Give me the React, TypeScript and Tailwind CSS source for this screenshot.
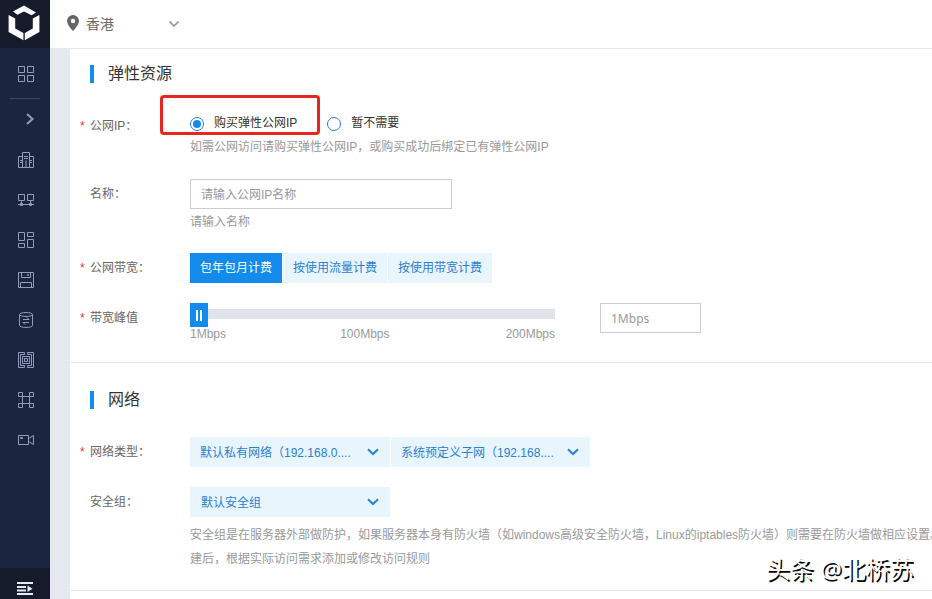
import React, { useState } from 'react';

const HexLogo = () => (
  <svg width="32" height="36" viewBox="0 0 32 36" fill="#fff">
    <path d="M5 6.600 L16 .6 L28 7.400 L23.600 10.200 L16 6.600 L9.400 9.800 Z" />
    <path d="M.6 10 L7.200 13.600 V23.400 L15.400 28 V35.200 L.6 27 Z" />
    <path d="M31.400 10 L24.800 13.600 V23.400 L16.800 28 V35.200 L31.400 27 Z" />
  </svg>
);

const menuIcons: React.ReactNode[] = [
  // region
  <><path d="M4.500 4.500h-4v11h15v-11h-4M4.500 15.500v-15h7v15" /><path d="M2 8.500h3M2 10.500h3M6 4.500h4M6 6.500h4M11 8.500h3M11 10.500h3M8 8.500v7" /></>,
  // servers
  <><path d="M.5 2.500h6v6h-6zM9.500 2.500h6v6h-6zM3.500 8.500v4M12.500 8.500v4M0 12.500h16" /><path d="M2.500 11.500h2v2h-2zM11.500 11.500h2v2h-2z" fill="currentColor" /></>,
  // images
  <path d="M.5.5h6v8h-6zM9.500.5h6v4h-6zM.5 11.500h6v4h-6zM9.500 7.500h6v8h-6z" />,
  // disk
  <path d="M.5.5h15v15h-15zM3.500.5v5h9v-5M9.500 2.500h1v1h-1zM2.500 15.500v-5h11v5" />,
  // database
  <><path d="M1.500 2.500v11c0 2.600 13 2.600 13 0v-11" /><path d="M1.500 2.500c0-2.600 13-2.600 13 0s-13 2.600-13 0z" /><path d="M5 7.500h6l-2-2M11 10.500H5l2 2" /></>,
  // network
  <><path d="M6.500.5h-6v15h6v-2h-4v-11h4zM9.500.5h6v15h-6v-2h4v-11h-4z" /><path d="M4.500 4.500h7v7h-7zM6.500 6.500h3v3h-3z" /></>,
  // nodes
  <path d="M.5.5h4v4h-4zM11.500.5h4v4h-4zM.5 11.500h4v4h-4zM11.500 11.500h4v4h-4zM4.500 4.500h7M4.500 11.500h7M4.500 4v8M11.500 4v8" />,
  // camera
  <path d="M.5 3.500h10v9H.5zM2.500 5.500h2v1h-2zM10.500 6.500l5-3v9l-5-3" />,
];

const Chevron = () => (
  <svg width="12" height="8" viewBox="0 0 12 8" fill="none" stroke="#2a80cf" strokeWidth="2">
    <path d="M1 1.200 L6 6 L11 1.200" />
  </svg>
);

const Sidebar = () => (
  <aside className="w-[50px] shrink-0 h-full flex flex-col bg-[#1b2540] text-[#929dba]">
    <div className="h-12 flex pl-2 pt-[5px] bg-[#151b2b]">
      <HexLogo />
    </div>
    <div className="h-[50px] flex justify-center items-center pl-0.5 pt-0.5">
      <svg width="17" height="17" viewBox="0 0 17 17" fill="none" stroke="currentColor">
        <path d="M.5.5h6v6h-6zM9.500.5h6v6h-6zM.5 9.500h6v6h-6zM9.500 9.500h6v6h-6z" />
      </svg>
    </div>
    <div className="h-px mx-2.5 bg-[#3b4661]" />
    <div className="h-10 flex items-center justify-center pl-2.5">
      <svg width="8" height="12" viewBox="0 0 8 12" fill="none" stroke="currentColor" strokeWidth="2">
        <path d="M1 1 L6.500 6 L1 11" />
      </svg>
    </div>
    <nav className="flex flex-col pt-px">
      {menuIcons.map((icon, i) => (
        <button key={i} className="h-10 flex items-center justify-center pl-0.5">
          <svg width="16" height="16" viewBox="0 0 16 16" fill="none" stroke="currentColor">{icon}</svg>
        </button>
      ))}
    </nav>
    <div className="mt-auto h-[31px] flex justify-center pt-3.5 bg-[#151b2b]">
      <svg width="16" height="13" viewBox="0 0 16 13" fill="#e4ebf5">
        <path d="M0 0h16v2H0zM0 4h9v2H0zM0 7.500h9v2H0zM0 11h16v2H0zM10.500 3.500l5 3.300-5 3.200z" />
      </svg>
    </div>
  </aside>
);

const SectionTitle = ({ children }: { children: React.ReactNode }) => (
  <div className="flex items-center h-[18px]">
    <span className="w-1 h-[18px] bg-[#128bed]" />
    <h2 className="ml-3.5 text-base leading-4 text-[#333]">{children}</h2>
  </div>
);

interface RowProps {
  label: string;
  required?: boolean;
  className?: string;
  children: React.ReactNode;
}

const Row = ({ label, required, className = '', children }: RowProps) => (
  <div className={`flex ${className}`}>
    <div className="w-[110px] -ml-2.5 h-[30px] shrink-0 flex items-center text-[#666]">
      <span className="w-2.5 text-[#e8323c]">{required && '*'}</span>
      {label}
    </div>
    <div className="min-w-0 flex-1">{children}</div>
  </div>
);

const Radio = ({ checked, label, onClick }: { checked: boolean; label: string; onClick: () => void }) => (
  <button onClick={onClick} className="flex items-center gap-2.5 text-[#333]">
    <span className="mt-0.5 w-3.5 h-3.5 rounded-full border border-[#2a80cf] flex items-center justify-center">
      {checked && <span className="w-2 h-2 rounded-full bg-[#128bed]" />}
    </span>
    <span>{label}</span>
  </button>
);

const billing = [
  { name: '包年包月计费', size: 'w-[92px]' },
  { name: '按使用流量计费', size: 'w-[104px]' },
  { name: '按使用带宽计费', size: 'w-[104px]' },
];

const Select = ({ text, className }: { text: string; className: string }) => (
  <button className={`h-[30px] flex items-center justify-between pr-[11px] bg-[#e8f5fd] text-[#2a80cf] ${className}`}>
    <span className="pt-0.5 whitespace-nowrap">{text}</span>
    <Chevron />
  </button>
);

export default function App() {
  const [needIp, setNeedIp] = useState(true);
  const [plan, setPlan] = useState(0);

  return (
    <div className="w-[932px] h-[599px] flex overflow-hidden bg-white text-xs font-['Liberation_Sans','Noto_Sans_CJK_SC',sans-serif]">
      <Sidebar />
      <div className="flex-1 min-w-0 flex flex-col">
        <header className="h-[49px] shrink-0 flex items-center pl-[17px] border-b border-[#e5e8ec] text-sm text-[#666]">
          <svg width="12" height="16" viewBox="0 0 12 16" fill="#666" className="-mt-0.5">
            <path fillRule="evenodd" d="M6 0a6 6 0 0 0-6 6c0 4 6 10 6 10s6-6 6-10a6 6 0 0 0-6-6zm0 3.800a2.200 2.200 0 1 1 0 4.400 2.200 2.200 0 0 1 0-4.400z" />
          </svg>
          <span className="ml-[7px] w-[83px]">香港</span>
          <svg width="10" height="6" viewBox="0 0 10 6" fill="none" stroke="#999" strokeWidth="1.700">
            <path d="M.5.5 L5 5 L9.500.5" />
          </svg>
        </header>

        <div className="flex-1 min-h-0 flex">
          <div className="w-5 shrink-0 bg-[#e6e9f0]" />
          <main className="flex-1 min-w-0">
            <section className="h-[314px] pl-5 pt-4 border-b border-[#e3e5e8]">
              <SectionTitle>弹性资源</SectionTitle>

              <Row label="公网IP：" required className="mt-7 h-[68px]">
                <div className="relative -mt-px h-[27px] pb-px flex items-center gap-[30px]">
                  <Radio checked={needIp} label="购买弹性公网IP" onClick={() => setNeedIp(true)} />
                  <Radio checked={!needIp} label="暂不需要" onClick={() => setNeedIp(false)} />
                  <div className="absolute -left-[30px] -top-[15px] w-40 h-10 border-3 border-[#e8261f] rounded pointer-events-none" />
                </div>
                <p className="leading-5 text-[#999]">如需公网访问请购买弹性公网IP，或购买成功后绑定已有弹性公网IP</p>
              </Row>

              <Row label="名称：" className="h-[74px]">
                <input
                  placeholder="请输入公网IP名称"
                  className="block w-[262px] h-[30px] px-2.5 pt-0.5 border border-[#ccc] placeholder:text-[#999] outline-none"
                />
                <p className="mt-[3px] leading-5 text-[#999]">请输入名称</p>
              </Row>

              <Row label="公网带宽：" required className="h-[50px]">
                <div className="flex gap-px">
                  {billing.map((item, i) => (
                    <button
                      key={item.name}
                      onClick={() => setPlan(i)}
                      className={`h-[30px] ${item.size} ${plan === i ? 'bg-[#128bed] text-white' : 'bg-[#e8f5fd] text-[#2a80cf]'}`}
                    >
                      {item.name}
                    </button>
                  ))}
                </div>
              </Row>

              <Row label="带宽峰值" required>
                <div className="flex items-start">
                  <div className="w-[365px] text-[#999]">
                    <div className="h-6 flex items-center">
                      <div className="w-[18px] h-6 flex items-center justify-center gap-0.5 bg-[#128bed]">
                        <span className="w-0.5 h-[11px] bg-white" />
                        <span className="w-0.5 h-[11px] bg-white" />
                      </div>
                      <div className="flex-1 h-2.5 -mt-0.5 bg-[#e1e3eb]" />
                    </div>
                    <div className="flex justify-between leading-[14px]">
                      <span>1Mbps</span>
                      <span className="pr-0.5">100Mbps</span>
                      <span>200Mbps</span>
                    </div>
                  </div>
                  <input defaultValue="1Mbps" className="ml-[45px] w-[101px] h-[30px] px-2.5 border border-[#ccc] text-[#999] font-['Noto_Sans',sans-serif] outline-none" />
                </div>
              </Row>
            </section>

            <section className="h-[228px] pl-5 pt-7 border-b border-[#e3e5e8]">
              <SectionTitle>网络</SectionTitle>
              <Row label="网络类型：" required className="mt-7 h-[50px]">
                <div className="flex gap-px">
                  <Select text="默认私有网络（192.168.0...." className="w-[200px] pl-2.5" />
                  <Select text="系统预定义子网（192.168...." className="w-[199px] pl-2.5" />
                </div>
              </Row>
              <Row label="安全组：">
                <Select text="默认安全组" className="w-[200px] pl-[11px]" />
                <p className="mt-1.5 leading-6 text-[#999] whitespace-nowrap">
                  安全组是在服务器外部做防护，如果服务器本身有防火墙（如windows高级安全防火墙，Linux的iptables防火墙）则需要在防火墙做相应设置。
                  <br />
                  建后，根据实际访问需求添加或修改访问规则
                </p>
              </Row>
            </section>
          </main>
        </div>
      </div>
      <div className="absolute left-[766px] top-[551px] text-2xl leading-9 whitespace-nowrap text-white font-['Noto_Sans','Noto_Sans_CJK_SC',sans-serif] [text-shadow:1.5px_1.5px_0_#000]">
        头条 @北桥苏
      </div>
    </div>
  );
}
